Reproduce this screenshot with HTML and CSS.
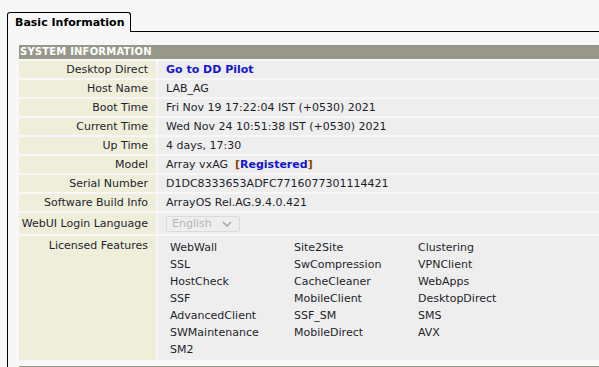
FILE: index.html
```html
<!DOCTYPE html>
<html lang="en">
<head>
  <meta charset="UTF-8" />
  <title>Basic Information</title>
  <link rel="stylesheet" href="styles.css">
</head>
<body>

<div class="tabs">
  <div class="tab">Basic Information</div>
  <div class="tab-fill"></div>
</div>

<div class="panel">
  <table class="info">
    <tr><th colspan="2">SYSTEM INFORMATION</th></tr>
    <tr><td class="label">Desktop Direct</td><td class="value"><a href="#" class="link">Go to DD Pilot</a></td></tr>
    <tr><td class="label">Host Name</td><td class="value">LAB_AG</td></tr>
    <tr><td class="label">Boot Time</td><td class="value">Fri Nov 19 17:22:04 IST (+0530) 2021</td></tr>
    <tr><td class="label">Current Time</td><td class="value">Wed Nov 24 10:51:38 IST (+0530) 2021</td></tr>
    <tr><td class="label">Up Time</td><td class="value">4 days, 17:30</td></tr>
    <tr><td class="label">Model</td><td class="value">Array vxAG&nbsp;&nbsp;<span class="bracket">[</span><a href="#" class="link">Registered</a><span class="bracket">]</span></td></tr>
    <tr><td class="label">Serial Number</td><td class="value">D1DC8333653ADFC7716077301114421</td></tr>
    <tr><td class="label">Software Build Info</td><td class="value">ArrayOS Rel.AG.9.4.0.421</td></tr>
    <tr class="row-lang">
      <td class="label">WebUI Login Language</td>
      <td class="value">
        <span class="select-wrap">
          <select class="select" disabled>
            <option>English</option>
          </select>
          <svg class="chevron" width="10" height="6" viewBox="0 0 10 6">
            <path d="M1 1 L5 5 L9 1" fill="none" stroke="#a8a8a8" stroke-width="1.6"/>
          </svg>
        </span>
      </td>
    </tr>
    <tr class="row-features">
      <td class="label">Licensed Features</td>
      <td class="value">
        <div class="features">
          <span>WebWall</span><span>Site2Site</span><span>Clustering</span>
          <span>SSL</span><span>SwCompression</span><span>VPNClient</span>
          <span>HostCheck</span><span>CacheCleaner</span><span>WebApps</span>
          <span>SSF</span><span>MobileClient</span><span>DesktopDirect</span>
          <span>AdvancedClient</span><span>SSF_SM</span><span>SMS</span>
          <span>SWMaintenance</span><span>MobileDirect</span><span>AVX</span>
          <span>SM2</span>
        </div>
      </td>
    </tr>
  </table>

  <table class="info next">
    <tr><th colspan="2"></th></tr>
  </table>
</div>

</body>
</html>
```

FILE: styles.css
```css
* {
  box-sizing: border-box;
}

body {
  margin: 0;
  background: #f7f7f7;
  font-family: 'DejaVu Sans', Verdana, sans-serif;
  font-size: 11px;
  color: #1e1e2a;
  overflow: hidden;
}

.tabs {
  display: flex;
  padding: 12px 0 0 7px;
}

.tab {
  border: 1px solid #000;
  border-bottom: none;
  border-radius: 3px 3px 0 0;
  padding: 0 6px 0 7px;
  height: 20px;
  line-height: 19px;
  font-weight: bold;
  color: #000;
}

.tab-fill {
  flex: 1;
  border-bottom: 1px solid #000;
}

.panel {
  margin-left: 7px;
  border-left: 1px solid #000;
  padding: 11px 0 0 9px;
  width: 640px;
}

.info {
  border-collapse: separate;
  border-spacing: 2px;
  width: 620px;
}

.info th {
  background: #97978a;
  color: #fff;
  font-size: 10px;
  letter-spacing: 0.2px;
  font-weight: bold;
  text-align: left;
  height: 14px;
  line-height: 14px;
  padding: 0 0 0 1px;
}

.info td {
  height: 17px;
  line-height: 17px;
  padding: 0;
}

.label {
  width: 137px;
  background: #efeedb;
  text-align: right;
  padding-right: 8px !important;
  white-space: nowrap;
}

.value {
  background: #eeeeee;
  padding-left: 8px !important;
}

.link {
  color: #1515d0;
  font-weight: bold;
  text-decoration: none;
}

.bracket {
  color: #8a4a00;
  font-weight: bold;
}

.row-lang td {
  height: 21px;
}

.select-wrap {
  position: relative;
  display: inline-block;
  vertical-align: middle;
  margin-top: -1px;
}

.select {
  appearance: none;
  -webkit-appearance: none;
  width: 74px;
  height: 16px;
  border: 1px solid #d4d4d4;
  border-radius: 2px;
  background: #eeeeee;
  color: #a0a0a0;
  font-family: 'DejaVu Sans', Verdana, sans-serif;
  font-size: 11px;
  padding: 0 0 0 5px;
  line-height: 14px;
  display: block;
}

.chevron {
  position: absolute;
  right: 8px;
  top: 5px;
}

.row-features td {
  vertical-align: top;
}

.row-features .label {
  padding-top: 1px;
}

.features {
  display: grid;
  grid-template-columns: repeat(3, 124px);
  grid-auto-rows: 17px;
  padding: 3px 0 2px 4px;
}

.next {
  margin-top: 2px;
}
```
